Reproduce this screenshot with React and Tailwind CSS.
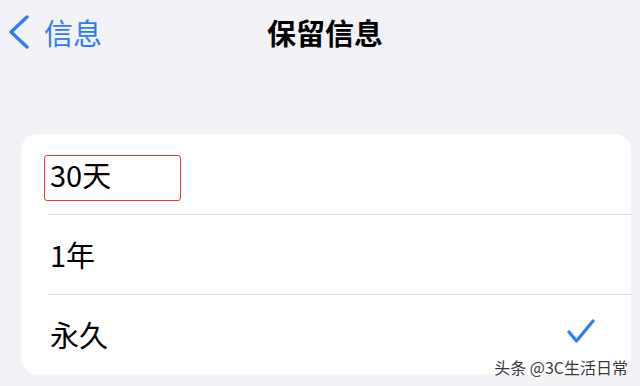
import React from "react";

const rows = ["30天", "1年", "永久"];

export default function App() {
  return (
    <div
      className="relative w-[640px] h-[386px] overflow-hidden bg-[#f2f2f7] flex flex-col"
      style={{ fontFamily: '"Noto Sans CJK SC", "Noto Sans", sans-serif' }}
    >
      {/* Nav bar */}
      <div className="relative h-[64px] flex items-center">
        <div className="flex items-center pl-[8px] text-[#2f7cf6]">
          <svg width="22" height="34" viewBox="0 0 22 34" fill="none">
            <polyline
              points="19,2 3,17 19,32"
              stroke="currentColor"
              strokeWidth="3.4"
              strokeLinecap="round"
              strokeLinejoin="round"
            />
          </svg>
          <span className="ml-[14px] text-[29px] leading-none">信息</span>
        </div>
        <div className="absolute left-0 right-0 text-center pl-[10px] text-[29px] font-bold leading-none text-black pointer-events-none">
          保留信息
        </div>
      </div>

      {/* List card */}
      <div className="mt-[70px] ml-[21px] mr-[9px] bg-white rounded-[16px] flex flex-col">
        {rows.map((label, i) => (
          <div key={label} className="relative h-[80px] flex items-center">
            {i > 0 && (
              <div className="absolute top-0 left-[27px] right-0 h-px bg-[#d9d9dd]" />
            )}
            <span className="pl-[29px] text-[29px] leading-none text-black">{label}</span>
            {i === 0 && (
              <div className="absolute left-[23px] top-[21px] w-[137px] h-[46px] border-[1.5px] border-[#e53935] rounded-[3px]" />
            )}
            {i === 2 && (
              <svg
                className="ml-auto mr-[36px] mb-[6px]"
                width="28"
                height="26"
                viewBox="0 0 28 26"
                fill="none"
              >
                <polyline
                  points="2,14 9.5,23 26,3"
                  stroke="#2f7cf6"
                  strokeWidth="3.2"
                  strokeLinecap="round"
                  strokeLinejoin="round"
                />
              </svg>
            )}
          </div>
        ))}
      </div>

      {/* Watermark */}
      <div
        className="absolute right-[12px] bottom-[11px] text-[16px] leading-none text-[#3a3a3a]"
        style={{ textShadow: "0 0 2px #fff, 0 0 2px #fff" }}
      >
        头条 @3C生活日常
      </div>
    </div>
  );
}
